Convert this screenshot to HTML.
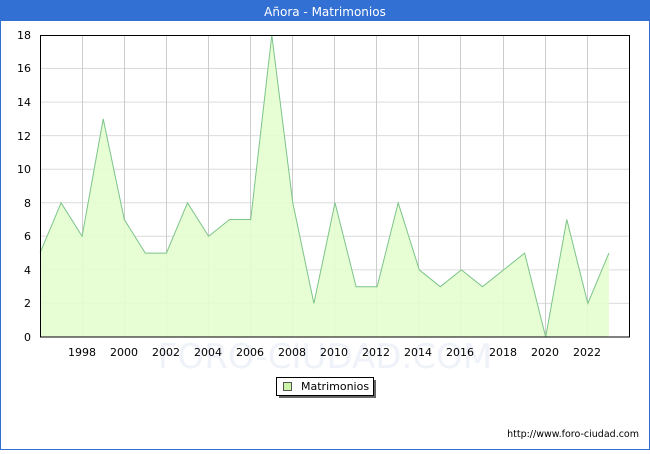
<!DOCTYPE html>
<html><head><meta charset="utf-8"><style>
body{margin:0;width:650px;height:450px;overflow:hidden;background:#fff;font-family:"DejaVu Sans","Liberation Sans",sans-serif}
</style></head><body>
<svg width="650" height="450" xmlns="http://www.w3.org/2000/svg" font-family="DejaVu Sans, Liberation Sans, sans-serif">
<rect x="0.5" y="0.5" width="649" height="449" fill="#fff" stroke="#3370d3"/>
<rect x="0" y="0" width="650" height="21" fill="#3370d3"/>
<text x="325" y="16" text-anchor="middle" fill="#fff" font-size="12">Añora - Matrimonios</text>
<text x="325" y="368" text-anchor="middle" fill="#f0f2fa" font-size="34">FORO-CIUDAD.COM</text>
<g stroke="#dcdcdc" stroke-width="1">
<line x1="40" x2="630" y1="303.4" y2="303.4"/><line x1="40" x2="630" y1="269.9" y2="269.9"/>
<line x1="40" x2="630" y1="236.3" y2="236.3"/><line x1="40" x2="630" y1="202.8" y2="202.8"/>
<line x1="40" x2="630" y1="169.2" y2="169.2"/><line x1="40" x2="630" y1="135.6" y2="135.6"/>
<line x1="40" x2="630" y1="102.1" y2="102.1"/><line x1="40" x2="630" y1="68.5" y2="68.5"/>
</g>
<g stroke="#cccccc" stroke-width="1">
<line x1="82.5" x2="82.5" y1="35" y2="337"/><line x1="124.5" x2="124.5" y1="35" y2="337"/>
<line x1="166.5" x2="166.5" y1="35" y2="337"/><line x1="208.5" x2="208.5" y1="35" y2="337"/>
<line x1="250.5" x2="250.5" y1="35" y2="337"/><line x1="292.5" x2="292.5" y1="35" y2="337"/>
<line x1="334.5" x2="334.5" y1="35" y2="337"/><line x1="376.5" x2="376.5" y1="35" y2="337"/>
<line x1="418.5" x2="418.5" y1="35" y2="337"/><line x1="460.5" x2="460.5" y1="35" y2="337"/>
<line x1="503.5" x2="503.5" y1="35" y2="337"/><line x1="545.5" x2="545.5" y1="35" y2="337"/>
<line x1="587.5" x2="587.5" y1="35" y2="337"/>
</g>
<polygon fill="#e4fdcf" fill-opacity="0.9" stroke="none" points="40,337 40,253.1 61.1,202.8 82.1,236.3 103.2,118.9 124.3,219.5 145.3,253.1 166.4,253.1 187.5,202.8 208.6,236.3 229.6,219.5 250.7,219.5 271.8,35 292.8,202.8 313.9,303.4 335,202.8 356.1,286.7 377.1,286.7 398.2,202.8 419.3,269.9 440.3,286.7 461.4,269.9 482.5,286.7 503.6,269.9 524.6,253.1 545.7,337 566.8,219.5 587.8,303.4 608.9,253.1 608.9,337"/>
<polyline fill="none" stroke="#7cc48a" stroke-width="1" points="40,253.1 61.1,202.8 82.1,236.3 103.2,118.9 124.3,219.5 145.3,253.1 166.4,253.1 187.5,202.8 208.6,236.3 229.6,219.5 250.7,219.5 271.8,35 292.8,202.8 313.9,303.4 335,202.8 356.1,286.7 377.1,286.7 398.2,202.8 419.3,269.9 440.3,286.7 461.4,269.9 482.5,286.7 503.6,269.9 524.6,253.1 545.7,337 566.8,219.5 587.8,303.4 608.9,253.1"/>
<rect x="40.5" y="35.5" width="589" height="301.5" fill="none" stroke="#000"/>
<g font-size="11" fill="#000" text-anchor="end">
<text x="31" y="341">0</text><text x="31" y="307">2</text><text x="31" y="274">4</text>
<text x="31" y="240">6</text><text x="31" y="207">8</text><text x="31" y="173">10</text>
<text x="31" y="140">12</text><text x="31" y="106">14</text><text x="31" y="72">16</text>
<text x="31" y="39">18</text>
</g>
<g font-size="11" fill="#000" text-anchor="middle">
<text x="82" y="356">1998</text><text x="124" y="356">2000</text><text x="166" y="356">2002</text>
<text x="208" y="356">2004</text><text x="250" y="356">2006</text><text x="292" y="356">2008</text>
<text x="334" y="356">2010</text><text x="376" y="356">2012</text><text x="418" y="356">2014</text>
<text x="460" y="356">2016</text><text x="503" y="356">2018</text><text x="545" y="356">2020</text>
<text x="587" y="356">2022</text>
</g>
<rect x="279" y="380" width="97" height="18" fill="#666"/>
<rect x="276.5" y="377.5" width="97" height="18" fill="#fff" stroke="#000"/>
<rect x="283.5" y="382.5" width="8" height="8" fill="#ccf5a8" stroke="#555"/>
<text x="301" y="390" font-size="11" fill="#000">Matrimonios</text>
<text x="639" y="437" text-anchor="end" font-size="9.5" fill="#000">http://www.foro-ciudad.com</text>
</svg>
</body></html>
